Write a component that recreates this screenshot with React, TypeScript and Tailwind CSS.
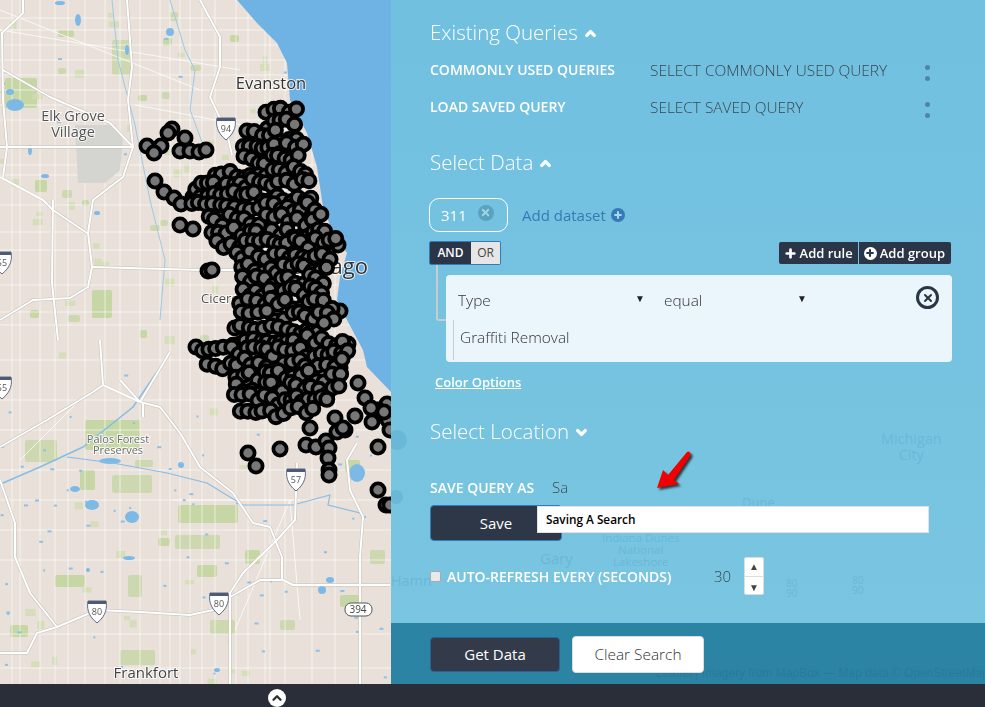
import { ChevronUp, ChevronDown, Plus, X } from 'lucide-react'

// small seeded random so the point cloud stays the same on each load
let seed = 42
const rnd = () => {
  seed = (seed * 16807) % 2147483647
  return (seed - 1) / 2147483646
}

// [y, left, right] spans of the dense part of the cloud
const spans: [number, number, number][] = [
  [112, 266, 298], [124, 264, 300], [136, 244, 302], [148, 242, 304], [160, 240, 306], [172, 214, 310],
  [184, 194, 313], [196, 192, 316], [208, 188, 318], [220, 206, 322], [232, 210, 328], [244, 214, 338],
  [256, 234, 334], [268, 240, 330], [280, 240, 330], [292, 240, 330], [304, 238, 335], [316, 238, 340],
  [328, 234, 330], [340, 230, 345], [352, 202, 350], [364, 207, 348], [376, 234, 343], [388, 236, 343],
  [400, 234, 328], [412, 237, 316],
]
const cloud: [number, number][] = []
spans.forEach(([y, a, b]) => {
  // jittered steps rather than pure random, the dots stay evenly spread
  for (let x = a + rnd() * 4; x < b; x += 5 + rnd() * 4) cloud.push([x, y + rnd() * 12 - 6])
})
const outliers: [number, number][] = [
  [172, 129], [168, 133], [185, 138], [147, 146], [161, 146], [154, 153], [180, 151], [190, 151], [199, 152], [206, 150],
  [155, 181], [164, 192], [174, 198], [181, 204], [193, 197], [180, 225], [193, 229], [208, 271], [212, 270], [196, 347],
  [248, 453], [256, 466], [280, 449], [306, 445], [316, 447], [326, 441], [329, 448], [328, 458], [329, 470], [329, 475],
  [378, 447], [378, 490], [386, 505], [387, 404], [378, 410], [375, 417], [355, 416], [345, 430], [335, 418], [310, 428],
  [378, 415], [388, 420], [358, 383], [365, 398], [340, 368], [348, 344], [340, 311], [338, 245], [328, 243], [390, 505],
  [371, 408], [384, 412], [372, 422], [390, 430], [337, 432], [343, 428],
]

const majorRoads = [
  '3,70 50,97 110,123 133,147',
  '127,0 132,67 128,100 133,147 123,177 93,200 88,233 92,267 88,287 70,298 33,300 0,320',
  '23,0 23,13 2,33 3,100 7,147 3,177',
  '0,177 43,200 53,210 87,233',
  '0,147 133,147',
  '53,200 52,283 58,340',
  '92,267 200,270 250,270',
  '200,0 220,37 220,67 210,97 227,133 232,155',
  '0,447 47,420 93,392 103,385 140,402 160,407 180,433 200,467 233,493 253,523 270,527 282,557 282,580',
  '103,385 100,340',
  '0,480 15,523 15,557 30,593 57,627',
  '0,653 27,653 37,633 57,627 97,610 140,612 190,615 213,610 230,597 260,580 283,580 293,585 390,585',
  '297,463 295,520 277,540 243,573 230,593 230,684',
  '360,684 360,557 363,517 350,490 347,460 357,443',
  '143,403 143,417',
  '120,380 140,402 170,352',
]
const gridX = [12, 20, 40, 55, 68, 85, 105, 120, 140, 160, 170, 180, 190, 202, 215, 236, 248, 265, 270, 285, 312, 335]
const gridY = [18, 30, 45, 60, 75, 90, 105, 120, 165, 175, 205, 232, 250, 285, 312, 325, 360, 400, 430, 470, 500, 530, 560, 634, 668]
const minorRoads = [
  'M0 30L240 70', 'M0 10L200 90', 'M135 105L270 130', 'M172 500H300', 'M235 630L290 500', 'M300 620L290 500', 'M20 460L80 400',
]
const greens: [number, number, number, number][] = [
  [5, 78, 32, 30], [112, 40, 20, 35], [58, 30, 16, 7], [170, 12, 8, 9], [163, 38, 9, 8], [190, 65, 11, 6], [230, 35, 9, 7],
  [58, 68, 8, 6], [138, 95, 9, 6], [162, 92, 8, 7], [35, 180, 12, 12], [62, 190, 10, 8], [82, 200, 7, 6], [150, 225, 10, 6],
  [92, 290, 20, 28], [68, 315, 12, 7], [30, 310, 9, 8], [160, 220, 8, 6], [140, 330, 7, 8], [200, 335, 9, 9],
  [85, 420, 55, 30], [25, 440, 32, 22], [80, 470, 15, 20], [112, 475, 40, 18], [178, 505, 60, 18], [175, 535, 45, 14], [158, 538, 12, 8],
  [128, 575, 14, 22], [55, 575, 30, 12], [210, 620, 25, 14], [10, 625, 18, 12], [120, 650, 35, 15], [340, 595, 20, 12],
  [370, 550, 15, 14], [245, 550, 15, 14], [280, 620, 15, 10], [345, 460, 15, 12], [135, 460, 18, 7], [197, 565, 20, 12],
]
const ponds: [number, number, number, number][] = [
  [110, 461, 11, 3], [132, 517, 7, 6], [92, 505, 7, 5], [75, 489, 5, 3], [129, 558, 6, 2], [322, 590, 4, 4], [217, 670, 3, 2],
  [357, 473, 8, 9], [15, 105, 9, 6], [60, 3, 5, 2], [170, 32, 4, 4], [10, 92, 4, 3], [78, 20, 3, 6], [108, 173, 3, 2],
  [127, 50, 2, 5], [30, 150, 2, 5], [45, 176, 4, 2], [97, 213, 3, 2], [181, 465, 3, 3], [88, 570, 2, 2], [330, 580, 4, 3],
]
const specks: [number, number][] = Array.from({ length: 90 }, () => [rnd() * 385, rnd() < 0.7 ? 400 + rnd() * 280 : rnd() * 380])
const tufts: [number, number][] = Array.from({ length: 60 }, () => [rnd() * 280, rnd() * 680])

const Shield = ({ x, y, n }: { x: number; y: number; n: string }) => (
  <g transform={`translate(${x} ${y})`}>
    <path d="M-9 -11H9C10 -5 10 3 0 11C-10 3 -10 -5 -9 -11Z" fill="#fff" stroke="#5f6c85" strokeWidth="1" />
    <path d="M-9 -11H9L9.3 -8H-9.3Z" fill="#4f5a76" />
    <text y="3" textAnchor="middle" fontSize="9" fill="#555">{n}</text>
  </g>
)

const MapLabel = ({ x, y, size, fill = '#333', children, anchor = 'middle' }: any) => (
  <text x={x} y={y} fontSize={size} fill={fill} textAnchor={anchor} stroke="#fff" strokeWidth="2" paintOrder="stroke" strokeOpacity="0.8">
    {children}
  </text>
)

function MapPane() {
  return (
    <div className="w-[391px] h-full shrink-0 bg-[#e8e0d9]">
      <svg width="391" height="684" viewBox="0 0 391 684" className="block">
        <g className="blur-[0.5px]">
          {greens.map(([x, y, w, h], i) => (
            <rect key={i} x={x} y={y} width={w} height={h} rx="2" fill="#c4d6a2" opacity={i % 2 ? 0.75 : 0.95} />
          ))}
          {tufts.map(([x, y], i) => (
            <rect key={i} x={x} y={y} width={5 + (i % 6)} height={4 + (i % 5)} fill="#cfdcb0" opacity="0.8" />
          ))}
          {gridX.map(x => (
            <path key={x} d={`M${x} 0V684`} stroke="#fff" strokeOpacity="0.6" strokeWidth="1" />
          ))}
          {gridY.map(y => (
            <path key={y} d={`M0 ${y}H391`} stroke="#fff" strokeOpacity="0.6" strokeWidth="1" />
          ))}
          {minorRoads.map((d, i) => (
            <path key={i} d={d} stroke="#fff" strokeOpacity="0.75" strokeWidth="1" fill="none" />
          ))}
          {ponds.map(([cx, cy, rx, ry], i) => (
            <ellipse key={i} cx={cx} cy={cy} rx={rx} ry={ry} fill="#7db9e6" />
          ))}
          {specks.map(([x, y], i) => (
            <rect key={i} x={x} y={y} width={2 + (i % 3)} height="2" fill="#8cc0e8" />
          ))}
          <path d="M75 125H115L123 140L120 170L105 183H78Z" fill="#d4d4d0" />
          <polyline points="3,483 40,467 83,447 133,407 170,353" stroke="#85bde6" strokeWidth="1.5" fill="none" />
          <polyline points="67,457 113,463 167,473 207,483 243,505 293,505 330,495 328,505 360,513 363,520" stroke="#85bde6" strokeWidth="1.2" fill="none" />
          <polyline points="170,0 185,50 195,70 190,110 205,150" stroke="#9cc8e6" strokeWidth="1" fill="none" />
          <polyline points="112,0 118,60 135,125 150,200 165,260 160,320" stroke="#9cc8e6" strokeWidth="1" fill="none" />
          {majorRoads.map((p, i) => (
            <polyline key={i} points={p} stroke="#c4bfb8" strokeWidth="3" fill="none" strokeLinejoin="round" />
          ))}
          {majorRoads.map((p, i) => (
            <polyline key={i} points={p} stroke="#fff" strokeWidth="2" fill="none" strokeLinejoin="round" />
          ))}
          <path d="M237 0L257 23L277 43L287 63L290 100L307 133L317 167L323 207L333 233L347 253L340 277L337 300L347 320L363 350L367 367L391 392V0Z" fill="#6fb2e4" />
        </g>
        <Shield x={226} y={129} n="94" />
        <Shield x={296} y={480} n="57" />
        <Shield x={97} y={612} n="80" />
        <Shield x={219} y={604} n="80" />
        <Shield x={2} y={263} n="55" />
        <Shield x={2} y={388} n="55" />
        <rect x="345" y="603" width="27" height="13" rx="6" fill="#fff" stroke="#555" />
        <text x="358" y="613" textAnchor="middle" fontSize="10" fill="#444">394</text>
        <g fontFamily="'Open Sans', sans-serif">
          <MapLabel x={271} y={89} size={16.5} fill="#333">Evanston</MapLabel>
          <MapLabel x={73} y={121} size={14.5} fill="#555">Elk Grove</MapLabel>
          <MapLabel x={73} y={137} size={14.5} fill="#555">Village</MapLabel>
          <MapLabel x={118} y={443} size={11} fill="#6d6d6d">Palos Forest</MapLabel>
          <MapLabel x={118} y={454} size={11} fill="#6d6d6d">Preserves</MapLabel>
          <MapLabel x={146} y={678} size={15} fill="#444">Frankfort</MapLabel>
          <MapLabel x={368} y={274} size={22} fill="#333" anchor="end">Chicago</MapLabel>
          <MapLabel x={201} y={303} size={13} fill="#555" anchor="start">Cicero</MapLabel>
        </g>
        {[...outliers, ...cloud].map(([x, y], i) => (
          <circle key={i} cx={x} cy={y} r="6.6" fill="#777" stroke="#000" strokeWidth="3.8" />
        ))}
      </svg>
    </div>
  )
}

const Heading = ({ title, open = true }: { title: string; open?: boolean }) => (
  <h2 className="flex items-center gap-[5px] text-[20.5px] leading-[28px] font-light text-white">
    {title}
    {open ? <ChevronUp size={15} strokeWidth={5.5} className="mt-[3px]" /> : <ChevronDown size={15} strokeWidth={5.5} className="mt-[3px]" />}
  </h2>
)

const QueryRow = ({ label, value }: { label: string; value: string }) => (
  <div className="flex h-[37px] items-start">
    <span className="w-[220px] text-[14px] leading-[18px] font-semibold text-white">{label}</span>
    <span className="w-[277px] text-[15.4px] leading-[20px] font-light text-[#37474f]">{value}</span>
    <span className="flex flex-col gap-[6px] pt-[4px] ml-[-2px]">
      <i className="w-[5px] h-[5px] rounded-full bg-[#4f86a8]" />
      <i className="w-[5px] h-[5px] rounded-full bg-[#4f86a8]" />
    </span>
  </div>
)

export default function App() {
  return (
    <div className="w-[985px] h-[707px] overflow-hidden flex flex-col font-['Open_Sans',sans-serif]">
      <div className="flex h-[684px]">
        <MapPane />

        <div className="relative flex-1 flex flex-col bg-gradient-to-b from-[#71c0e0] to-[#7ac6e1] overflow-hidden">
          {/* what shows faintly of the map under the panel */}
          <div className="absolute inset-0 text-[#69b8d8] text-[14.4px] font-normal">
            <span className="absolute left-[490px] top-[431px] text-center leading-[16px]">Michigan<br />City</span>
            <span className="absolute left-[351px] top-[493px] text-[13px]">Dune</span>
            <span className="absolute left-[149px] top-[547px] text-[15px]">Gary</span>
            <span className="absolute left-[211px] top-[532px] text-center leading-[12px] text-[11.5px]">Indiana Dunes<br />National<br />Lakeshore</span>
            <span className="absolute left-[0px] top-[570px] w-[40px] overflow-hidden whitespace-nowrap">Hammond</span>
            <span className="absolute left-[395px] top-[578px] text-center leading-[10px] text-[10px]">80<br />90</span>
            <span className="absolute left-[461px] top-[575px] text-center leading-[10px] text-[10px]">80<br />90</span>
            <span className="absolute left-[-4px] top-[430px] w-[20px] h-[20px] rounded-full bg-[#69b8d8]" />
            <span className="absolute left-[-2px] top-[490px] w-[14px] h-[14px] rounded-full bg-[#69b8d8]" />
          </div>

          <div className="relative flex-1 pl-[39px] pr-[34px] pt-[18px]">
            <Heading title="Existing Queries" />
            <div className="mt-[15px]">
              <QueryRow label="COMMONLY USED QUERIES" value="SELECT COMMONLY USED QUERY" />
              <QueryRow label="LOAD SAVED QUERY" value="SELECT SAVED QUERY" />
            </div>

            <div className="mt-[13px]">
              <Heading title="Select Data" />
            </div>

            <div className="mt-[22px] ml-[-1px] flex items-center gap-[14px]">
              <div className="flex items-center w-[79px] h-[34px] rounded-[10px] border border-white pl-[11px] text-[15px] text-white">
                311
                <span className="ml-[11px] mb-[5px] w-[16px] h-[16px] rounded-full bg-[#5aa3bf] flex items-center justify-center">
                  <X size={11} strokeWidth={4} className="text-[#a5d3e4]" />
                </span>
              </div>
              <span className="flex items-center gap-[5px] text-[15px] text-[#337ab7]">
                Add dataset
                <span className="w-[14px] h-[14px] rounded-full bg-[#337ab7] flex items-center justify-center">
                  <Plus size={10} strokeWidth={5} className="text-[#a8d8ee]" />
                </span>
              </span>
            </div>

            <div className="mt-[9px] ml-[-1px] flex items-start justify-between">
              <div className="flex h-[24px] w-[72px] rounded-[2px] border border-[#337ab7] text-[12px] leading-[22px] overflow-hidden">
                <span className="w-[41px] text-center bg-[#2a3547] text-white font-semibold">AND</span>
                <span className="flex-1 text-center bg-[#e6e6e6] text-[#444]">OR</span>
              </div>
              <div className="flex h-[22px] gap-[1px] mt-[1px] text-white text-[13px] leading-[22px] font-semibold">
                <span className="flex items-center gap-[3px] pl-[5px] pr-[5px] rounded-l-[2px] bg-[#2a3547]">
                  <Plus size={13} strokeWidth={5} />Add rule
                </span>
                <span className="flex items-center gap-[3px] pl-[5px] pr-[6px] rounded-r-[2px] bg-[#2a3547]">
                  <span className="w-[13px] h-[13px] rounded-full bg-white flex items-center justify-center">
                    <Plus size={10} strokeWidth={5} className="text-[#2a3547]" />
                  </span>
                  Add group
                </span>
              </div>
            </div>

            <div className="relative mt-[10px] ml-[16px] h-[87px] w-[506px] rounded-[4px] bg-[#eaf6fb] text-[15.4px] font-light text-[#333]">
              <span className="absolute left-[-10px] top-[-10px] w-[10px] h-[56px] border-l-2 border-b-2 border-[#c9ccce] rounded-bl-[3px]" />
              <span className="absolute left-[7px] top-[45px] h-[40px] w-px bg-[#c9ccce]" />
              <div className="flex items-start pt-[16px] pl-[12px]">
                <span className="relative w-[206px] leading-[20px]">
                  Type
                  <span className="absolute left-[177px] top-[-3px] text-[10px] text-[#222]">▼</span>
                </span>
                <span className="relative w-[252px] leading-[20px]">
                  equal
                  <span className="absolute left-[133px] top-[-3px] text-[10px] text-[#222]">▼</span>
                </span>
                <span className="mt-[-5px] w-[23px] h-[23px] rounded-full border-[3px] border-[#2a3547] flex items-center justify-center">
                  <X size={12} strokeWidth={4} className="text-[#2a3547]" />
                </span>
              </div>
              <p className="mt-[17px] ml-[14px] leading-[20px]">Graffiti Removal</p>
            </div>

            <a className="block mt-[11px] ml-[5px] text-[13px] leading-[18px] font-semibold text-white underline">Color Options</a>

            <div className="mt-[26px]">
              <Heading title="Select Location" open={false} />
            </div>

            <div className="mt-[32px] flex items-center h-[20px]">
              <span className="w-[122px] text-[14px] font-semibold text-white">SAVE QUERY AS</span>
              <span className="text-[15px] font-light text-[#37474f]">Sa</span>
            </div>

            <div className="relative mt-[8px] h-[36px]">
              <button className="w-[132px] h-[36px] rounded-[4px] bg-[#2d3748] border border-[#337ab7] text-[15px] text-white">Save</button>
              <div className="absolute left-[107px] top-[1px] w-[392px] h-[27px] bg-white border border-[#e2e2e2] pl-[8px] text-[11.8px] leading-[25px] font-semibold text-black">
                Saving A Search
              </div>
            </div>

            <div className="mt-[16px] flex items-center h-[38px]">
              <span className="w-[11px] h-[11px] rounded-[2px] bg-[#e9e9e9] border border-[#aaa] mr-[6px]" />
              <span className="w-[267px] text-[14px] font-semibold text-white">AUTO-REFRESH EVERY (SECONDS)</span>
              <span className="w-[30px] text-[15px] font-light text-[#37474f]">30</span>
              <span className="w-[20px] h-[38px] rounded-[2px] bg-white border border-[#ddd] flex flex-col items-center justify-around text-[#444] text-[10px] leading-none">
                <span>▲</span>
                <span className="w-full h-px bg-[#ddd]" />
                <span>▼</span>
              </span>
            </div>
          </div>

          <div className="relative h-[61px] bg-[#2c84a4] pl-[39px] pt-[13px] flex items-start gap-[12px]">
            <span className="absolute left-[265px] top-[41px] whitespace-nowrap text-[12px] font-['Liberation_Sans',sans-serif] text-[#287a9b]">
              Leaflet | Imagery from MapBox — Map data © OpenStreetMap
            </span>
            <button className="relative w-[130px] h-[35px] mt-px rounded-[4px] bg-[#333a49] border border-[#2e5f92] text-[15px] font-medium text-white">Get Data</button>
            <button className="relative w-[132px] h-[37px] rounded-[4px] bg-white border border-[#ddd] text-[15.4px] font-light text-[#333]">Clear Search</button>
          </div>

          {/* red annotation arrow */}
          <svg width="44" height="48" viewBox="0 0 44 48" className="absolute left-[264px] top-[446px] drop-shadow-[2px_2px_1px_rgba(0,0,0,0.7)]">
            <path d="M2 42L8 24L13 29L32 6C34 4 37 8 35 10L19 34L24 38Z" fill="#f00000" />
          </svg>
        </div>
      </div>

      <div className="relative h-[23px] bg-[#2a2e38]">
        <span className="absolute left-[268px] top-[5px] w-[18px] h-[18px] rounded-full bg-white flex items-center justify-center text-[#2a2e38]">
          <ChevronUp size={14} strokeWidth={4} />
        </span>
      </div>
    </div>
  )
}
